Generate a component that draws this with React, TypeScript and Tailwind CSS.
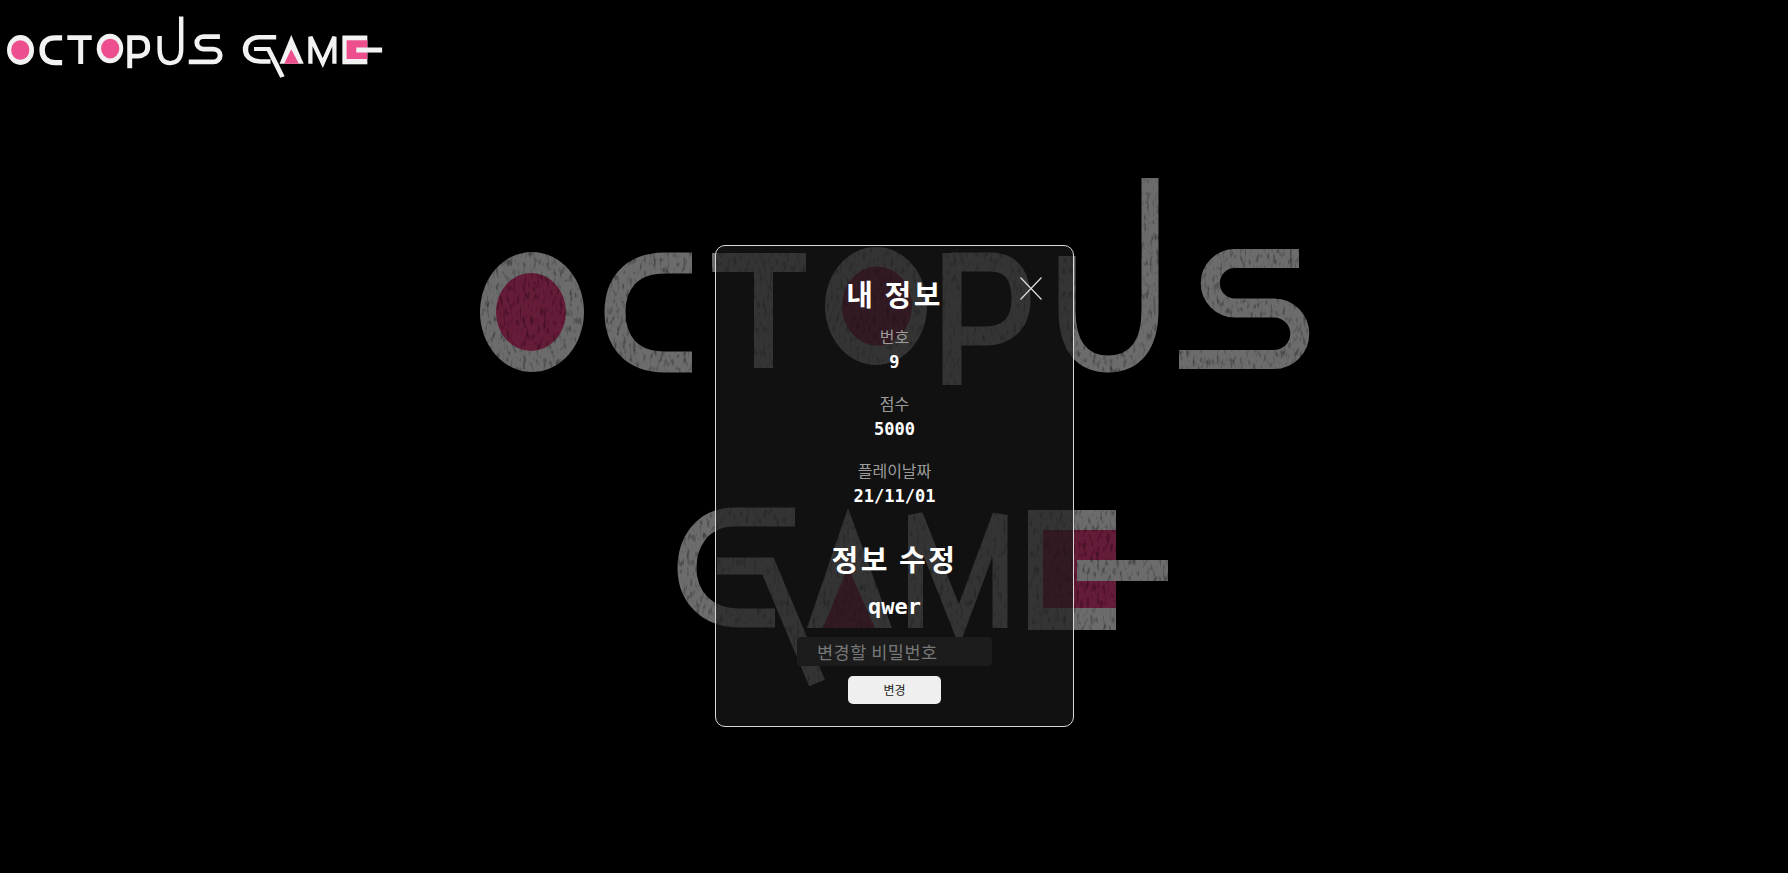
import React from 'react';

type LogoProps = { ink: string; pink: string };

// shapes are in page coordinates of the big background logo
const OctopusWord: React.FC<LogoProps> = ({ ink, pink }) => (
  <g fill="none" stroke={ink}>
    <ellipse cx="532" cy="312" rx="52" ry="60" fill={ink} stroke="none" />
    <ellipse cx="531" cy="312" rx="35" ry="39" fill={pink} stroke="none" />
    <path d="M692 263H665C630 263 615 285 615 312C615 340 630 362 665 362H692" strokeWidth="21" />
    <path d="M712 262.5H806M763.5 253V368" strokeWidth="19" />
    <ellipse cx="876" cy="306" rx="51" ry="59" fill={ink} stroke="none" />
    <ellipse cx="877" cy="306" rx="35" ry="39.5" fill={pink} stroke="none" />
    <path d="M952 253V385M952 262H990C1015 262 1021 280 1021 300C1021 325 1005 336 985 336H952" strokeWidth="19" />
    <path d="M1067 256V310C1067 350 1085 364 1108 364C1135 364 1150 345 1150 310V178" strokeWidth="17" />
    <path d="M1299 258.5H1235A24.75 24.75 0 0 0 1235 308H1274A25.75 25.75 0 0 1 1274 359.5H1179" strokeWidth="19" />
  </g>
);

const GameWord: React.FC<LogoProps> = ({ ink, pink }) => (
  <g fill="none" stroke={ink}>
    <path d="M795 517H735C700 517 687 545 687 568C687 595 705 618 740 618H775" strokeWidth="19" />
    <path d="M717 566H768L817 683" strokeWidth="17" />
    <polygon points="848,508 892,628 807,628" fill={ink} stroke="none" />
    <polygon points="848,567 875,628 823,628" fill={pink} stroke="none" />
    <path d="M915.5 628V515L959 625L1000 515V628" strokeWidth="15" />
    <rect x="1028" y="510" width="88" height="120" fill={ink} stroke="none" />
    <rect x="1043" y="530" width="73" height="78" fill={pink} stroke="none" />
    <rect x="1077" y="560" width="91" height="21" fill={ink} stroke="none" />
  </g>
);

const Stat: React.FC<{ label: string; value: string }> = ({ label, value }) => (
  <div className="flex flex-col items-center">
    <span className="text-[16px] leading-[20px] text-[#9c9c9c]">{label}</span>
    <span className="mt-[4px] font-['DejaVu_Sans_Mono',monospace] text-[17px] leading-[24px] font-bold text-white">{value}</span>
  </div>
);

export default function App() {
  return (
    <div className="relative h-[873px] w-full overflow-hidden bg-black font-['Noto_Sans_CJK_KR','Noto_Sans',sans-serif]">
      {/* background logo sits behind the modal */}
      <svg className="absolute top-0 left-0 blur-[0.5px]" width="1788" height="873" viewBox="0 0 1788 873">
        <defs>
          <filter id="worn" filterUnits="userSpaceOnUse" x="0" y="0" width="1788" height="873">
            <feTurbulence type="fractalNoise" baseFrequency="0.3 0.12" numOctaves="2" seed="4" result="n" />
            <feColorMatrix in="n" type="matrix" values="0 0 0 0 0  0 0 0 0 0  0 0 0 0 0  -1.2 0 0 0 1.62" result="m" />
            <feComposite in="SourceGraphic" in2="m" operator="in" />
          </filter>
        </defs>
        <g filter="url(#worn)">
          <OctopusWord ink="#6c6c6c" pink="#651a38" />
          <GameWord ink="#6c6c6c" pink="#651a38" />
        </g>
      </svg>

      <header className="relative h-[90px]">
        <svg width="400" height="90" viewBox="0 0 400 90" className="blur-[0.4px]">
          <g transform="translate(-117.8 -28) scale(0.26 0.25)">
            <OctopusWord ink="#f2f2f2" pink="#ec4e8e" />
          </g>
          <g transform="translate(50.4 -86.9) scale(0.284 0.24)">
            <GameWord ink="#f2f2f2" pink="#ec4e8e" />
          </g>
        </svg>
      </header>

      <main className="relative flex justify-center pt-[155px]">
        <section className="relative ml-px flex h-[482px] w-[359px] flex-col items-center rounded-[10px] border border-[#d8d8d8] bg-[rgba(26,26,26,0.67)] pt-[27px]">
          <button className="absolute top-[31px] right-[31px] text-[#dddddd]">
            <svg width="22" height="23" viewBox="0 0 22 23" fill="none" stroke="currentColor" strokeWidth="1.2">
              <path d="M0.5 0.5L21.5 22.5M21.5 0.5L0.5 22.5" />
            </svg>
          </button>

          <h2 className="text-[29px] leading-[40px] font-bold tracking-[2.5px] text-white">내 정보</h2>

          <div className="mt-[13px] flex flex-col items-center gap-[19px]">
            <Stat label="번호" value="9" />
            <Stat label="점수" value="5000" />
            <Stat label="플레이날짜" value="21/11/01" />
          </div>

          <h2 className="mt-[30px] text-[29px] leading-[40px] font-bold tracking-[2.5px] text-white">정보 수정</h2>

          <p className="mt-[13px] font-['DejaVu_Sans_Mono',monospace] text-[22px] leading-[32px] font-bold text-white">qwer</p>

          <input
            placeholder="변경할 비밀번호"
            className="mt-[14px] h-[29px] w-[195px] rounded-[4px] bg-[#1c1c1c] pl-[20px] text-[17.5px] tracking-[0.5px] text-white outline-none placeholder:text-[#777777]"
          />

          <button className="mt-[10px] h-[28px] w-[93px] rounded-[5px] bg-[#efefef] text-[12px] text-[#222222]">변경</button>
        </section>
      </main>
    </div>
  );
}
